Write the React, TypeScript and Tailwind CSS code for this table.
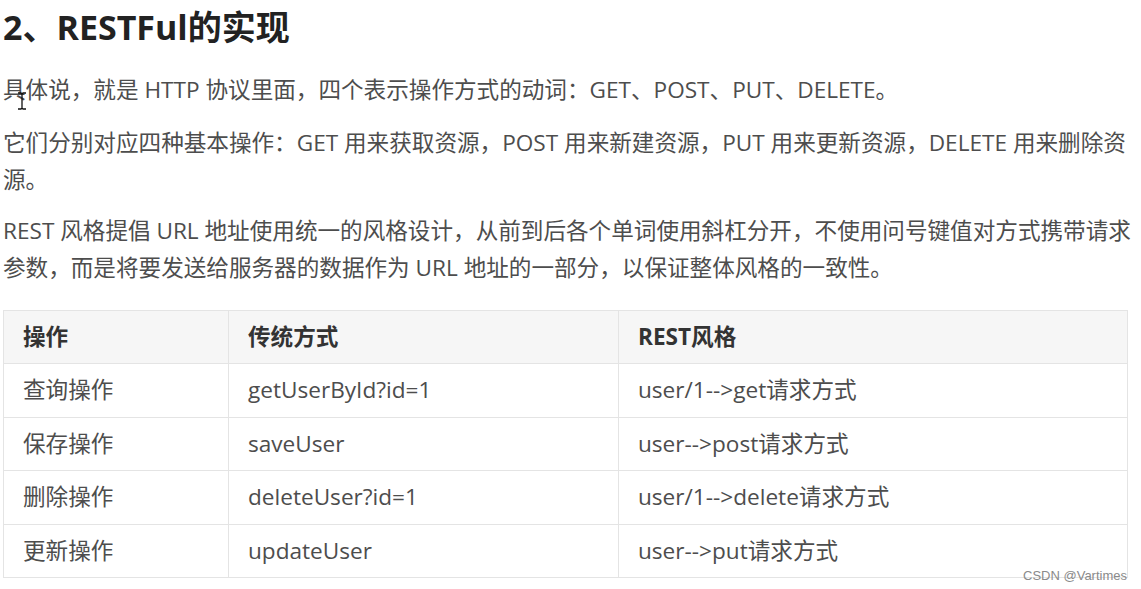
import React from "react";

const rows = [
  ["查询操作", "getUserById?id=1", "user/1-->get请求方式"],
  ["保存操作", "saveUser", "user-->post请求方式"],
  ["删除操作", "deleteUser?id=1", "user/1-->delete请求方式"],
  ["更新操作", "updateUser", "user-->put请求方式"],
];

export default function App() {
  return (
    <div
      className="relative w-[1141px] h-[589px] overflow-hidden bg-white text-[#4d4d4d]"
      style={{ fontFamily: '"Open Sans", "Noto Sans CJK SC", sans-serif' }}
    >
      <div className="w-[1135px] pl-[3px]">
        <h2 className="pt-[7px] text-[34px] leading-[40px] font-bold text-[#222]">2、RESTFul的实现</h2>

        <p className="mt-[24px] text-[22.6px] leading-[37px]">
          具体说，就是 HTTP 协议里面，四个表示操作方式的动词：GET、POST、PUT、DELETE。
        </p>
        <p className="mt-[16px] text-[22.6px] leading-[37px]">
          它们分别对应四种基本操作：GET 用来获取资源，POST 用来新建资源，PUT 用来更新资源，DELETE 用来删除资源。
        </p>
        <p className="mt-[14px] text-[22.6px] leading-[37px]">
          REST 风格提倡 URL 地址使用统一的风格设计，从前到后各个单词使用斜杠分开，不使用问号键值对方式携带请求参数，而是将要发送给服务器的数据作为 URL 地址的一部分，以保证整体风格的一致性。
        </p>

        <table className="mt-[24px] w-[1125px] border-collapse text-[22.6px]">
          <thead>
            <tr className="h-[53px] bg-[#f6f6f6]">
              <th className="w-[225px] border border-[#e4e4e4] px-[19px] text-left font-bold text-[#333]">操作</th>
              <th className="w-[390px] border border-[#e4e4e4] px-[19px] text-left font-bold text-[#333]">传统方式</th>
              <th className="border border-[#e4e4e4] px-[19px] text-left font-bold text-[#333]">REST风格</th>
            </tr>
          </thead>
          <tbody>
            {rows.map((r) => (
              <tr key={r[0]} className="h-[53.5px]">
                {r.map((c, i) => (
                  <td key={i} className="border border-[#e4e4e4] px-[19px]">
                    {c}
                  </td>
                ))}
              </tr>
            ))}
          </tbody>
        </table>
      </div>

      {/* text cursor */}
      <svg className="absolute left-[17px] top-[92px]" width="10" height="18" viewBox="0 0 10 18">
        <path d="M1 1h3l1 1 1-1h3M5 2v14M1 17h3l1-1 1 1h3" fill="none" stroke="#111" strokeWidth="1.3" />
      </svg>

      <div
        className="absolute right-[14px] top-[566px] text-[13px] text-[#8a8a8a]"
        style={{ fontFamily: '"Liberation Sans", Arial, sans-serif' }}
      >
        CSDN @Vartimes
      </div>
    </div>
  );
}
